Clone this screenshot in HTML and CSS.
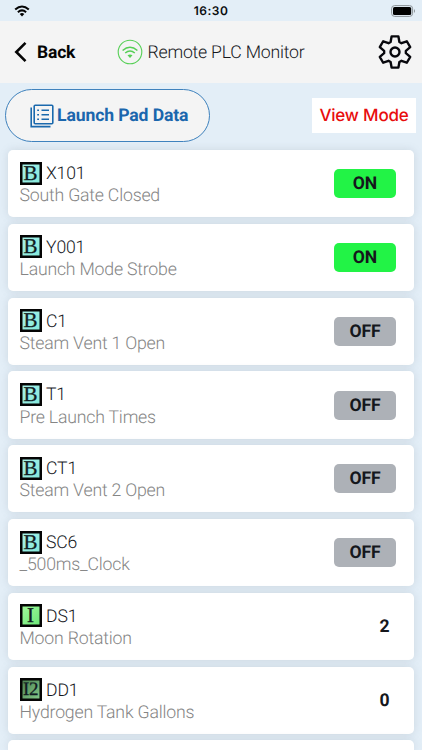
FILE: index.html
```html
<!DOCTYPE html>
<html lang="en">
<head>
<meta charset="utf-8">
<title>Remote PLC Monitor</title>
<link rel="stylesheet" href="styles.css">
</head>
<body>
<div class="status">
  <svg class="wifi" viewBox="0 0 16 12"><g fill="none" stroke="#050505" stroke-width="2.1"><path d="M1.2 4.5Q8-1.5 14.8 4.5"/><path d="M3.9 7.2Q8 3.7 12.1 7.2"/></g><path d="M5.7 9Q8 7.2 10.3 9L8 11.4Z"/></svg>
  <span class="time">16:30</span>
  <svg class="battery" viewBox="0 0 25 12"><rect x=".6" y=".6" width="21" height="10.8" rx="3" fill="none" stroke="#8b9297"/><rect x="2" y="2" width="18.2" height="8" rx="1.6"/><path d="M23 4Q25 6 23 8Z" fill="#8b9297"/></svg>
</div>
<header class="header">
  <svg class="chevron" viewBox="0 0 14 22"><path d="M12.500 1.800 3.300 11l9.200 9.200" fill="none" stroke="#050505" stroke-width="2.6"/></svg>
  <span class="back">Back</span>
  <svg class="signal" viewBox="0 0 26 26"><g fill="none" stroke="#55cf55"><circle cx="13" cy="13" r="11.8" stroke-width="1.1"/><path d="M5.600 11.500Q13 5 20.400 11.500M8.200 14Q13 10 17.800 14" stroke-width="1.5"/></g><path d="M10.500 16.300Q13 14.500 15.500 16.300L13 19Z" fill="#55cf55"/></svg>
  <h1 class="title">Remote PLC Monitor</h1>
  <svg class="gear" viewBox="-18 -18 36 36"><g fill="none" stroke="#08080d" stroke-width="2.4" stroke-linejoin="round"><path d="M-3.400-15.600H3.400L4.400-10 6.460-8.810 11.810-10.740 15.210-4.860 10.860-1.190V1.190L15.210 4.860 11.810 10.740 6.460 8.810 4.400 10 3.400 15.600H-3.400L-4.400 10-6.460 8.810-11.810 10.740-15.210 4.860-10.860 1.190V-1.190L-15.210-4.860-11.810-10.740-6.460-8.810-4.400-10Z"/><circle r="4.500"/></g></svg>
</header>
<div class="toolbar">
  <div class="launch">
    <svg class="list" viewBox="0 0 24 24"><g fill="none" stroke="#1a69ad"><rect x="4.200" y="1.200" width="18.600" height="18.600" rx="1" stroke-width="1.600"/><path d="M1.200 3.500V22.600H20.500" stroke-width="1.600"/><path d="M11.500 6.200H19M11.500 10.700H19M11.500 15.200H19M7.200 6.200H9M7.200 10.700H9M7.200 15.200H9" stroke-width="1.500"/></g></svg>
    <span class="launch-text">Launch Pad Data</span>
  </div>
  <div class="mode"><span>View Mode</span></div>
</div>
<main class="cards">
  <section class="card"><div class="info"><div class="name"><i class="badge">B</i><span>X101</span></div><p>South Gate Closed</p></div><b class="state on">ON</b></section>
  <section class="card"><div class="info"><div class="name"><i class="badge">B</i><span>Y001</span></div><p>Launch Mode Strobe</p></div><b class="state on">ON</b></section>
  <section class="card"><div class="info"><div class="name"><i class="badge">B</i><span>C1</span></div><p>Steam Vent 1 Open</p></div><b class="state">OFF</b></section>
  <section class="card"><div class="info"><div class="name"><i class="badge">B</i><span>T1</span></div><p>Pre Launch Times</p></div><b class="state">OFF</b></section>
  <section class="card"><div class="info"><div class="name"><i class="badge">B</i><span>CT1</span></div><p>Steam Vent 2 Open</p></div><b class="state">OFF</b></section>
  <section class="card"><div class="info"><div class="name"><i class="badge">B</i><span>SC6</span></div><p>_500ms_Clock</p></div><b class="state">OFF</b></section>
  <section class="card"><div class="info"><div class="name"><i class="badge int">I</i><span>DS1</span></div><p>Moon Rotation</p></div><b class="value">2</b></section>
  <section class="card"><div class="info"><div class="name"><i class="badge double">I2</i><span>DD1</span></div><p>Hydrogen Tank Gallons</p></div><b class="value">0</b></section>
  <section class="card last"></section>
</main>
</body>
</html>
```
FILE: styles.css
```css
* { box-sizing: border-box; }
html { background: #e3eef7; }
body {
  margin: 0;
  height: 750px;
  overflow: hidden;
  background: #e3eef7;
  color: #15171c;
  font-family: Roboto, sans-serif;
  white-space: nowrap;
  text-rendering: geometricPrecision;
}
svg { display: block; flex: none; }
.status {
  display: grid;
  grid-template-columns: 1fr auto 1fr;
  align-items: center;
  height: 21px;
  padding: 0 6px 0 14px;
}
.wifi { width: 16px; height: 12px; }
.time {
  font: 600 12px/20px Inter, sans-serif;
  letter-spacing: 0.5px;
  color: #0a0c0e;
  margin-left: -8px;
}
.battery { width: 25px; height: 12px; justify-self: end; }
.header {
  display: flex;
  align-items: center;
  height: 62px;
  padding: 0 9px 0 13px;
  background: #f4f4f4;
}
.chevron { width: 14px; height: 22px; }
.back {
  width: 80px;
  margin-left: 10px;
  padding-top: 1px;
  font-size: 17.5px;
  letter-spacing: -0.2px;
  font-weight: 700;
  color: #050505;
}
.signal { width: 26px; height: 26px; }
.title {
  flex: 1;
  margin: 0 0 0 4.5px;
  padding-top: 1px;
  font-size: 17.7px;
  letter-spacing: -0.22px;
  font-weight: 300;
  line-height: 24px;
}
.gear { width: 36px; height: 36px; }
.toolbar {
  display: flex;
  justify-content: space-between;
  align-items: flex-start;
  height: 67px;
  padding: 6px 6px 0 5px;
}
.launch {
  display: flex;
  align-items: center;
  width: 205px;
  height: 53px;
  padding-left: 24px;
  border: 1px solid #3f82bd;
  border-radius: 26.5px;
  background: #f4f4f4;
}
.list { width: 24px; height: 24px; }
.launch-text {
  margin-left: 3px;
  font-size: 17.6px;
  letter-spacing: -0.12px;
  font-weight: 700;
  color: #1a66ad;
}
.mode {
  display: grid;
  place-items: center;
  width: 104px;
  height: 35px;
  margin-top: 9px;
  background: #fff;
  color: #e80d0d;
  font: 500 17px/24px Inter, sans-serif;
  letter-spacing: -0.2px;
}
.cards { display: grid; gap: 6.5px; padding: 0 8.5px 0 8px; }
.card {
  display: flex;
  align-items: center;
  justify-content: space-between;
  height: 67.3px;
  padding: 0 17.5px 0 11.5px;
  border-radius: 5px;
  background: #fff;
  box-shadow: 0 0 8px rgba(110, 125, 140, 0.2);
}
.last { height: 10px; border-radius: 5px 5px 0 0; }
.info { padding-top: 1.6px; }
.name {
  display: flex;
  align-items: center;
  gap: 4.5px;
  height: 23px;
  font-size: 17.6px;
  letter-spacing: -0.15px;
  font-weight: 300;
}
.name span { padding-top: 1.6px; }
.badge {
  display: grid;
  place-items: center;
  width: 22px;
  height: 23px;
  border: 2px solid #050505;
  background: linear-gradient(135deg, #a9f3ea, #84e8da);
  box-shadow: inset 0 0 0 0.5px #050505;
  color: #101c23;
  font: 21px/19px "Liberation Serif", serif;
  letter-spacing: 0;
  -webkit-text-stroke: 0.3px #101c23;
}
.int { background: linear-gradient(135deg, #a1f99a, #6ce879); }
.double {
  background: linear-gradient(135deg, #4b8050, #83c889);
  font-size: 19px;
  letter-spacing: -0.5px;
}
.info p {
  margin: 0;
  padding-top: 0.6px;
  font-size: 17.7px;
  letter-spacing: -0.2px;
  font-weight: 300;
  line-height: 22px;
  color: #858585;
}
.state {
  width: 62px;
  height: 29px;
  border-radius: 5px;
  background: #adb1b7;
  font-size: 17.6px;
  letter-spacing: -0.1px;
  line-height: 30px;
  text-align: center;
}
.on { background: #22f346; }
.value { margin-right: 6.5px; padding-top: 1px; font-size: 17.6px; }
```
